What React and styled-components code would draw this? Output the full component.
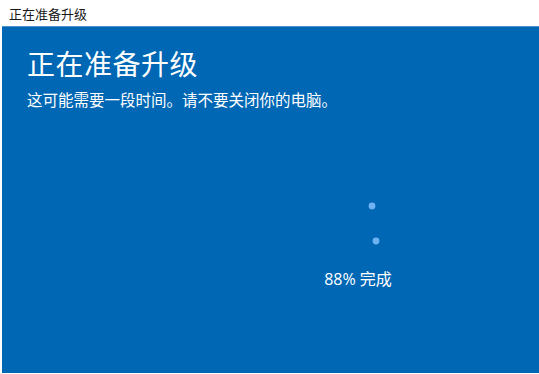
import React from "react";
import styled, { createGlobalStyle } from "styled-components";

const Global = createGlobalStyle`
  html, body { margin: 0; padding: 0; background: #ffffff; }
  body { font-family: "Noto Sans CJK SC", "Noto Sans", sans-serif; }
`;

const Window = styled.div`
  width: 539px;
  height: 374px;
  display: flex;
  flex-direction: column;
  background: #ffffff;
  overflow: hidden;
`;

const TitleBar = styled.div`
  height: 26px;
  flex: none;
  display: flex;
  align-items: center;
  padding-left: 9px;
  font-size: 13px;
  color: #1a1a1a;
  font-family: "Noto Sans CJK SC", sans-serif;
`;

const Panel = styled.div`
  flex: 1;
  margin: 0 0 1px 2px;
  background: #0067b5;
  border-top: 1px solid #4c8fcb;
  color: #ffffff;
  display: flex;
  flex-direction: column;
  padding: 16px 0 0 25px;
`;

const Heading = styled.h1`
  margin: 0;
  font-size: 28px;
  font-weight: 400;
  line-height: 40px;
  letter-spacing: 0.5px;
`;

const Sub = styled.p`
  margin: 6px 0 0 0;
  font-size: 15.5px;
  line-height: 20px;
  font-weight: 400;
`;

const Progress = styled.div`
  margin: 86px 0 0 295px;
  width: 72px;
  display: flex;
  flex-direction: column;
  align-items: center;
`;

const Percent = styled.div`
  margin-top: 14px;
  font-size: 16px;
  line-height: 20px;
  white-space: nowrap;
  font-family: "Open Sans", "Noto Sans CJK SC", sans-serif;
`;

function Spinner() {
  return (
    <svg width="60" height="60" viewBox="0 0 60 60">
      <circle cx="44" cy="11" r="3.4" fill="#6eb2f2" />
      <circle cx="48" cy="46" r="3.4" fill="#6eb2f2" />
    </svg>
  );
}

export default function App() {
  return (
    <>
      <Global />
      <Window>
        <TitleBar>正在准备升级</TitleBar>
        <Panel>
          <Heading>正在准备升级</Heading>
          <Sub>这可能需要一段时间。请不要关闭你的电脑。</Sub>
          <Progress>
            <Spinner />
            <Percent>88% 完成</Percent>
          </Progress>
        </Panel>
      </Window>
    </>
  );
}
